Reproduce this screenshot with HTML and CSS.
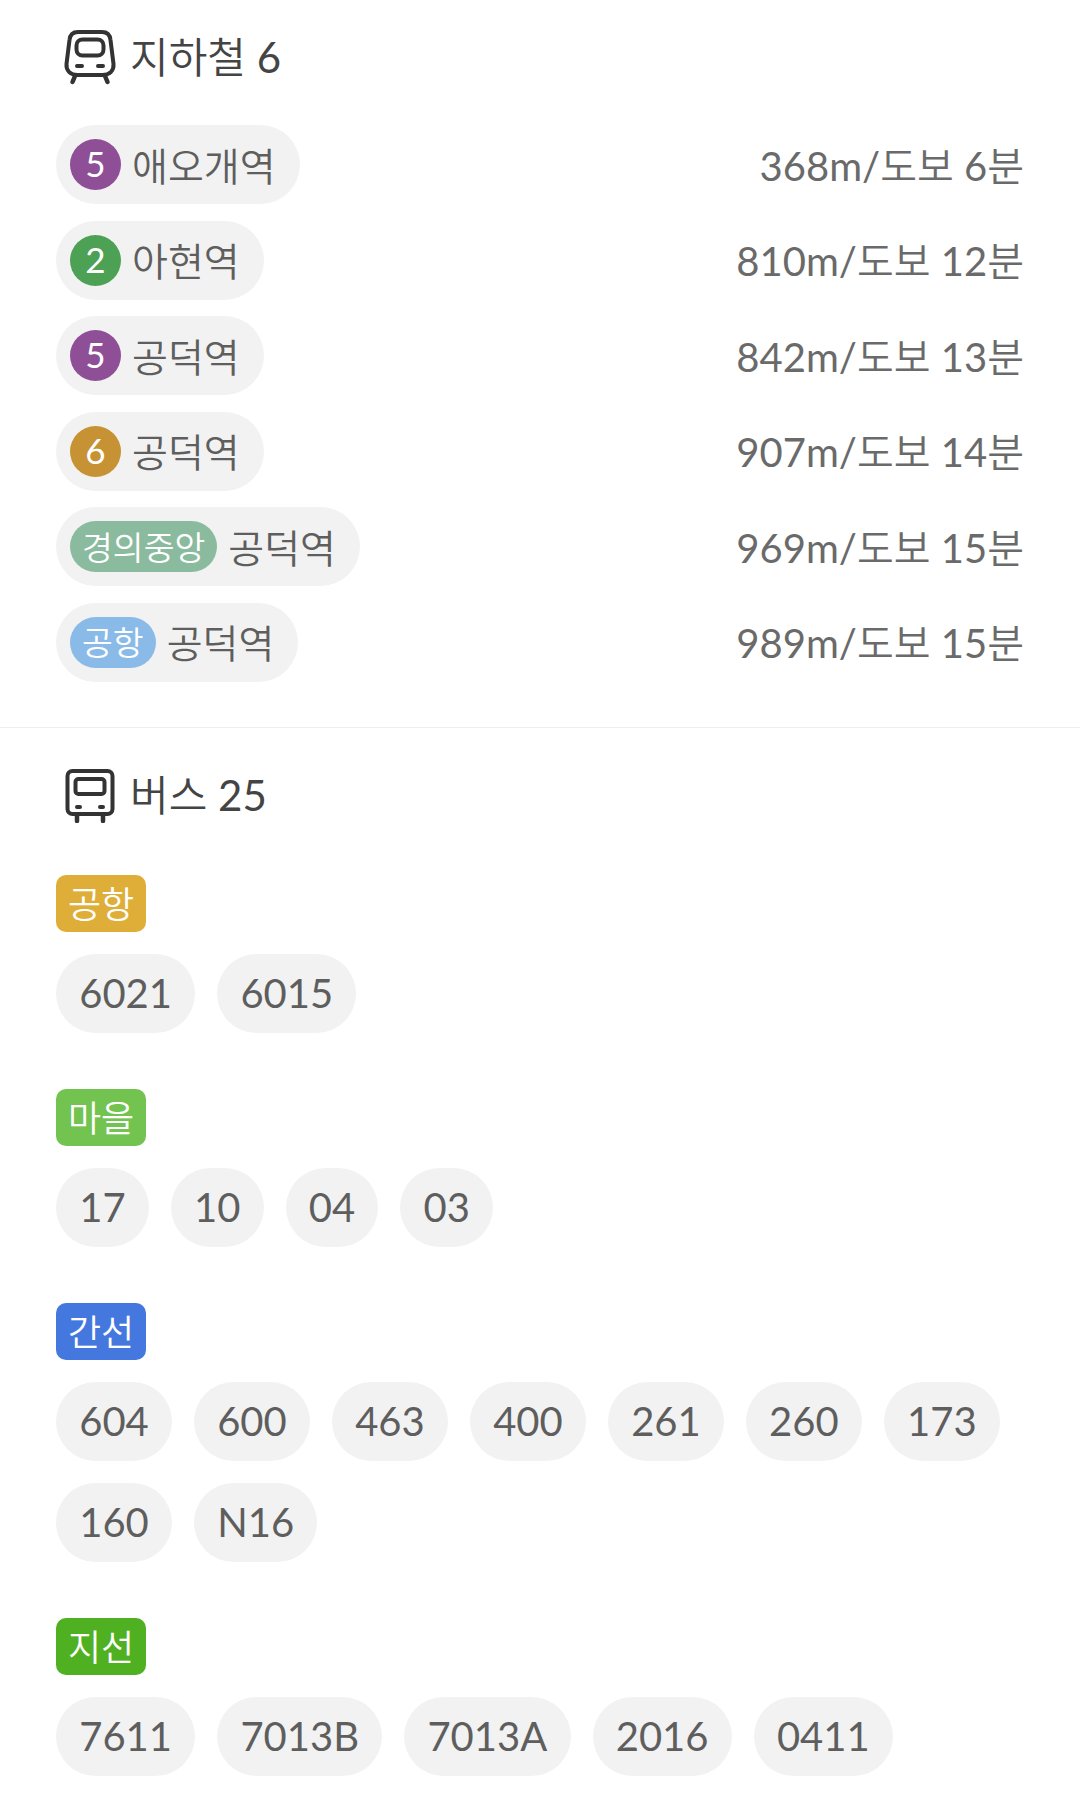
FILE: index.html
```html
<!DOCTYPE html>
<html lang="ko">
<head>
  <meta charset="UTF-8">
  <meta name="viewport" content="width=device-width, initial-scale=1.0">
  <title>교통정보</title>
  <link rel="stylesheet" href="styles.css">
</head>
<body>
  <section class="subway">
    <h2 class="heading">
      <svg class="heading-icon" viewBox="0 0 52 56" fill="none" stroke="#333" stroke-width="4" stroke-linecap="round" stroke-linejoin="round">
        <path d="M14 3h24c5 0 8 3 8.500 8l3 24c.5 7-4 11-11 11H13.500c-7 0-11.500-4-11-11l3-24c.5-5 3.500-8 8.500-8z"/>
        <rect x="12.500" y="10.500" width="27" height="16" rx="6"/>
        <path d="M13 37h5M34 37h5"/>
        <path d="M11 47l-2.500 6M41 47l2.500 6" stroke-width="4.500"/>
      </svg>
      <span class="heading-text"><span class="ko">지하철</span> 6</span>
    </h2>
    <ul class="stations">
      <li class="station">
        <span class="chip"><span class="line line-num purple">5</span><span class="name ko">애오개역</span></span>
        <span class="dist">368m/<span class="ko">도보</span> 6<span class="ko">분</span></span>
      </li>
      <li class="station">
        <span class="chip"><span class="line line-num green">2</span><span class="name ko">아현역</span></span>
        <span class="dist">810m/<span class="ko">도보</span> 12<span class="ko">분</span></span>
      </li>
      <li class="station">
        <span class="chip"><span class="line line-num purple">5</span><span class="name ko">공덕역</span></span>
        <span class="dist">842m/<span class="ko">도보</span> 13<span class="ko">분</span></span>
      </li>
      <li class="station">
        <span class="chip"><span class="line line-num ochre">6</span><span class="name ko">공덕역</span></span>
        <span class="dist">907m/<span class="ko">도보</span> 14<span class="ko">분</span></span>
      </li>
      <li class="station">
        <span class="chip"><span class="line line-name mint ko">경의중앙</span><span class="name ko">공덕역</span></span>
        <span class="dist">969m/<span class="ko">도보</span> 15<span class="ko">분</span></span>
      </li>
      <li class="station">
        <span class="chip"><span class="line line-name sky ko">공항</span><span class="name ko">공덕역</span></span>
        <span class="dist">989m/<span class="ko">도보</span> 15<span class="ko">분</span></span>
      </li>
    </ul>
  </section>

  <section class="bus">
    <h2 class="heading">
      <svg class="heading-icon" viewBox="0 0 52 56" fill="none" stroke="#333" stroke-width="4" stroke-linecap="round" stroke-linejoin="round">
        <rect x="3.500" y="4" width="45" height="43" rx="5"/>
        <rect x="11.500" y="12" width="29" height="15" rx="3"/>
        <path d="M13 40h3M36 40h3"/>
        <path d="M13 48v6M39 48v6" stroke-width="4.500"/>
      </svg>
      <span class="heading-text"><span class="ko">버스</span> 25</span>
    </h2>

    <div class="bus-group">
      <span class="tag tag-airport ko">공항</span>
      <div class="routes">
        <span class="route">6021</span>
        <span class="route">6015</span>
      </div>
    </div>
    <div class="bus-group">
      <span class="tag tag-village ko">마을</span>
      <div class="routes">
        <span class="route">17</span>
        <span class="route">10</span>
        <span class="route">04</span>
        <span class="route">03</span>
      </div>
    </div>
    <div class="bus-group">
      <span class="tag tag-trunk ko">간선</span>
      <div class="routes">
        <span class="route">604</span>
        <span class="route">600</span>
        <span class="route">463</span>
        <span class="route">400</span>
        <span class="route">261</span>
        <span class="route">260</span>
        <span class="route">173</span>
        <span class="route">160</span>
        <span class="route">N16</span>
      </div>
    </div>
    <div class="bus-group">
      <span class="tag tag-branch ko">지선</span>
      <div class="routes">
        <span class="route">7611</span>
        <span class="route">7013B</span>
        <span class="route">7013A</span>
        <span class="route">2016</span>
        <span class="route">0411</span>
      </div>
    </div>
  </section>
</body>
</html>
```

FILE: styles.css
```css
body {
  margin: 0;
  background: #fff;
  color: #5e5e5e;
  font-family: Lato, "Noto Sans CJK KR", sans-serif;
  font-size: 40px;
  font-weight: 400;
}

.ko {
  font-weight: 350;
}

.subway {
  padding: 29px 56px 45px;
  border-bottom: 1px solid #eee;
}

.bus {
  padding: 39px 56px 0;
}

.heading {
  display: flex;
  align-items: center;
  gap: 14px;
  height: 56px;
  margin: 0 0 40px 8px;
  color: #444;
  font-size: 42px;
  font-weight: 400;
}

.heading-text {
  margin-bottom: 5px;
}

.bus .heading {
  margin-bottom: 52px;
}

.heading-icon {
  width: 52px;
  height: 56px;
  flex: none;
}

.stations {
  display: flex;
  flex-direction: column;
  gap: 16.500px;
  margin: 0;
  padding: 0;
  list-style: none;
}

.station {
  display: flex;
  align-items: center;
  justify-content: space-between;
}

.chip {
  display: flex;
  align-items: center;
  gap: 11px;
  height: 79px;
  padding: 0 24px 0 14px;
  border-radius: 40px;
  background: #f2f2f2;
  font-size: 39px;
}

.name {
  margin-bottom: 2px;
}

.line {
  display: flex;
  align-items: center;
  justify-content: center;
  box-sizing: border-box;
  height: 51px;
  padding-bottom: 3px;
  border-radius: 26px;
  color: #fff;
}

.line-num {
  width: 51px;
  font-size: 35px;
}

.line-name {
  padding-left: 12px;
  padding-right: 12px;
  font-size: 33.500px;
}

.purple { background: #8f4f96; }
.green { background: #4da155; }
.ochre { background: #c69234; }
.mint { background: #8abb9e; }
.sky { background: #8abbe8; }

.dist {
  margin-bottom: 2px;
  color: #6a6a6a;
}

.bus-group {
  margin-bottom: 56px;
}

.tag {
  display: inline-flex;
  align-items: center;
  justify-content: center;
  box-sizing: border-box;
  width: 90px;
  height: 57px;
  margin-bottom: 22px;
  padding-bottom: 3px;
  border-radius: 10px;
  color: #fff;
  font-size: 36px;
}

.tag-airport { background: #dfae38; }
.tag-village { background: #72c34f; }
.tag-trunk { background: #4478de; }
.tag-branch { background: #4fb121; }

.routes {
  display: flex;
  flex-wrap: wrap;
  gap: 22px;
}

.route {
  display: flex;
  align-items: center;
  height: 79px;
  padding: 0 23.200px;
  border-radius: 40px;
  background: #f2f2f2;
}
```
